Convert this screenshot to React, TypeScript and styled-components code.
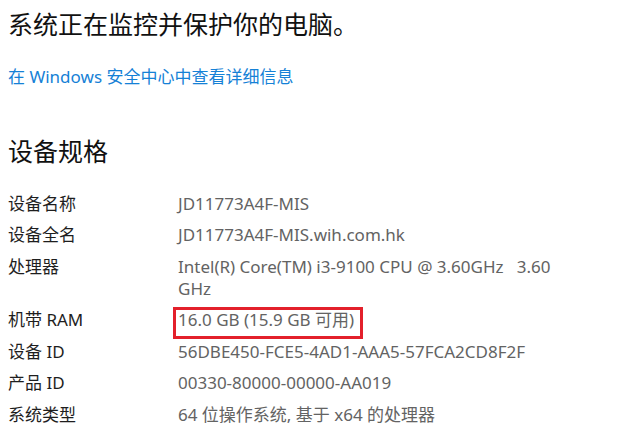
import styled, { createGlobalStyle } from "styled-components";

interface Spec {
  label: string;
  value: string;
  marked?: boolean;
}

const SPECS: Spec[] = [
  { label: "设备名称", value: "JD11773A4F-MIS" },
  { label: "设备全名", value: "JD11773A4F-MIS.wih.com.hk" },
  { label: "处理器", value: "Intel(R) Core(TM) i3-9100 CPU @ 3.60GHz\u00a0\u00a0\u00a03.60 GHz" },
  { label: "机带 RAM", value: "16.0 GB (15.9 GB 可用)", marked: true },
  { label: "设备 ID", value: "56DBE450-FCE5-4AD1-AAA5-57FCA2CD8F2F" },
  { label: "产品 ID", value: "00330-80000-00000-AA019" },
  { label: "系统类型", value: "64 位操作系统, 基于 x64 的处理器" },
];

function App() {
  return (
    <>
      <GlobalStyle />
      <Page>
        <StatusTitle>系统正在监控并保护你的电脑。</StatusTitle>
        <SecurityLink href="#">在 Windows 安全中心中查看详细信息</SecurityLink>
        <SectionTitle>设备规格</SectionTitle>
        <SpecList>
          {SPECS.map(spec => (
            <SpecRow key={spec.label}>
              <SpecLabel>{spec.label}</SpecLabel>
              <SpecValue>{spec.marked ? <Marked>{spec.value}</Marked> : spec.value}</SpecValue>
            </SpecRow>
          ))}
        </SpecList>
      </Page>
    </>
  );
}

const GlobalStyle = createGlobalStyle`
  html, body {
    margin: 0;
    background: #ffffff;
  }

  body {
    font-family: "Segoe UI", "Noto Sans", "Noto Sans CJK SC", sans-serif;
  }
`;

const Page = styled.div`
  width: 644px;
  height: 426px;
  box-sizing: border-box;
  padding: 8px 8px 0;
  overflow: hidden;
`;

const StatusTitle = styled.h2`
  margin: 0;
  font-size: 25px;
  line-height: 32px;
  font-weight: 400;
  color: #111111;
`;

const SecurityLink = styled.a`
  display: block;
  margin-top: 26px;
  font-size: 17px;
  line-height: 22px;
  color: #1581d6;
  text-decoration: none;
`;

const SectionTitle = styled.h3`
  margin: 46px 0 0;
  font-size: 25px;
  line-height: 34px;
  font-weight: 400;
  color: #111111;
`;

const SpecList = styled.div`
  margin-top: 20px;
  display: flex;
  flex-direction: column;
`;

const SpecRow = styled.div`
  display: grid;
  grid-template-columns: 170px 380px;
  padding: 4.75px 0;
  font-size: 17px;
  line-height: 22px;
`;

const SpecLabel = styled.div`
  color: #1e1e1e;
`;

const SpecValue = styled.div`
  color: #636363;
`;

const Marked = styled.span`
  position: relative;
  display: inline-block;

  &::after {
    content: "";
    position: absolute;
    left: -5px;
    top: -2.5px;
    width: 190px;
    height: 32px;
    box-sizing: border-box;
    border: 3px solid #e3202b;
  }
`;

export default App;
